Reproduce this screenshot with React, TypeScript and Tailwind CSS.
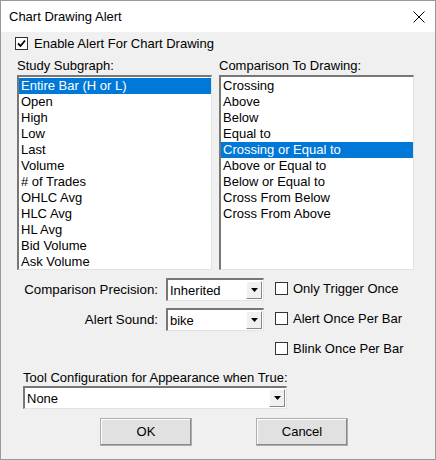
import React from "react";

const subgraphs = [
  "Entire Bar (H or L)",
  "Open",
  "High",
  "Low",
  "Last",
  "Volume",
  "# of Trades",
  "OHLC Avg",
  "HLC Avg",
  "HL Avg",
  "Bid Volume",
  "Ask Volume",
];

const comparisons = [
  "Crossing",
  "Above",
  "Below",
  "Equal to",
  "Crossing or Equal to",
  "Above or Equal to",
  "Below or Equal to",
  "Cross From Below",
  "Cross From Above",
];

function CheckBox({ checked }: { checked?: boolean }) {
  return (
    <span className="w-[13px] h-[13px] border border-[#333] bg-white flex items-center justify-center shrink-0">
      {checked && (
        <svg width="9" height="9" viewBox="0 0 9 9">
          <path d="M1 4.5 L3.5 7 L8 1.5" fill="none" stroke="#000" strokeWidth="1.8" />
        </svg>
      )}
    </span>
  );
}

function ListBox({ items, selected }: { items: string[]; selected: number }) {
  return (
    <div className="w-[195px] h-[195px] bg-white border-t-2 border-l-2 border-b border-r border-t-[#777] border-l-[#777] border-b-[#e3e3e3] border-r-[#e3e3e3] pt-[1px] overflow-hidden">
      {items.map((item, i) => (
        <div
          key={item}
          className={
            "h-[16px] leading-[16px] pl-[2px] text-[13px] " +
            (i === selected ? "bg-[#0078d7] text-white" : "text-black")
          }
        >
          {item}
        </div>
      ))}
    </div>
  );
}

function Select({ value, width }: { value: string; width: string }) {
  return (
    <div
      className={
        width +
        " h-[23px] bg-white border-t-2 border-l-2 border-b border-r border-t-[#777] border-l-[#777] border-b-[#e3e3e3] border-r-[#e3e3e3] flex items-center"
      }
    >
      <span className="flex-1 pl-[2px] text-[13px] text-black leading-none">{value}</span>
      <span className="w-[16px] h-[18px] mr-[1px] bg-[#f0f0f0] border-t border-l border-b border-r border-t-[#fff] border-l-[#fff] border-b-[#888] border-r-[#888] flex items-center justify-center">
        <svg width="7" height="4" viewBox="0 0 7 4">
          <path d="M0 0 H7 L3.5 4 Z" fill="#000" />
        </svg>
      </span>
    </div>
  );
}

function Button({ label }: { label: string }) {
  return (
    <button className="w-[92px] h-[28px] bg-[#e1e1e1] border border-[#adadad] shadow-[inset_-1px_-1px_0_#888,inset_1px_1px_0_#fff] text-[13px] text-black">
      {label}
    </button>
  );
}

export default function App() {
  return (
    <div
      className="w-[436px] h-[460px] border border-[#999] flex flex-col bg-[#f0f0f0] text-black"
      style={{ fontFamily: '"Liberation Sans", Arial, sans-serif' }}
    >
      <div className="h-[31px] bg-white flex items-center justify-between pl-[8px] pr-[10px] shrink-0">
        <span className="text-[13px]">Chart Drawing Alert</span>
        <svg width="12" height="12" viewBox="0 0 12 12">
          <path d="M0.5 0.5 L11.5 11.5 M11.5 0.5 L0.5 11.5" stroke="#000" strokeWidth="1" />
        </svg>
      </div>

      <div className="flex-1 pl-[14px] pt-[5px]">
        <div className="flex items-center gap-[6px] h-[13px]">
          <CheckBox checked />
          <span className="text-[13px]">Enable Alert For Chart Drawing</span>
        </div>

        <div className="flex gap-[7px] mt-[8px] ml-[2px]">
          <div>
            <div className="text-[13px] h-[17px] leading-[15px]">Study Subgraph:</div>
            <ListBox items={subgraphs} selected={0} />
          </div>
          <div>
            <div className="text-[13px] h-[17px] leading-[15px]">Comparison To Drawing:</div>
            <ListBox items={comparisons} selected={4} />
          </div>
        </div>

        <div className="flex mt-[8px]">
          <div className="flex flex-col gap-[7px]">
            <div className="flex items-center">
              <span className="w-[151px] text-right text-[13.3px] pr-[8px]">Comparison Precision:</span>
              <Select value="Inherited" width="w-[98px]" />
            </div>
            <div className="flex items-center">
              <span className="w-[151px] text-right text-[13.3px] pr-[8px]">Alert Sound:</span>
              <Select value="bike" width="w-[98px]" />
            </div>
          </div>
          <div className="flex flex-col gap-[17px] ml-[11px] mt-[4px]">
            <div className="flex items-center gap-[5px] h-[13px]">
              <CheckBox />
              <span className="text-[13px]">Only Trigger Once</span>
            </div>
            <div className="flex items-center gap-[5px] h-[13px]">
              <CheckBox />
              <span className="text-[13px]">Alert Once Per Bar</span>
            </div>
            <div className="flex items-center gap-[5px] h-[13px]">
              <CheckBox />
              <span className="text-[13px]">Blink Once Per Bar</span>
            </div>
          </div>
        </div>

        <div className="ml-[8px] mt-[13px]">
          <div className="text-[13px] h-[18px]">Tool Configuration for Appearance when True:</div>
          <Select value="None" width="w-[264px]" />
        </div>

        <div className="flex gap-[64px] ml-[85px] mt-[9px]">
          <Button label="OK" />
          <Button label="Cancel" />
        </div>
      </div>
    </div>
  );
}
